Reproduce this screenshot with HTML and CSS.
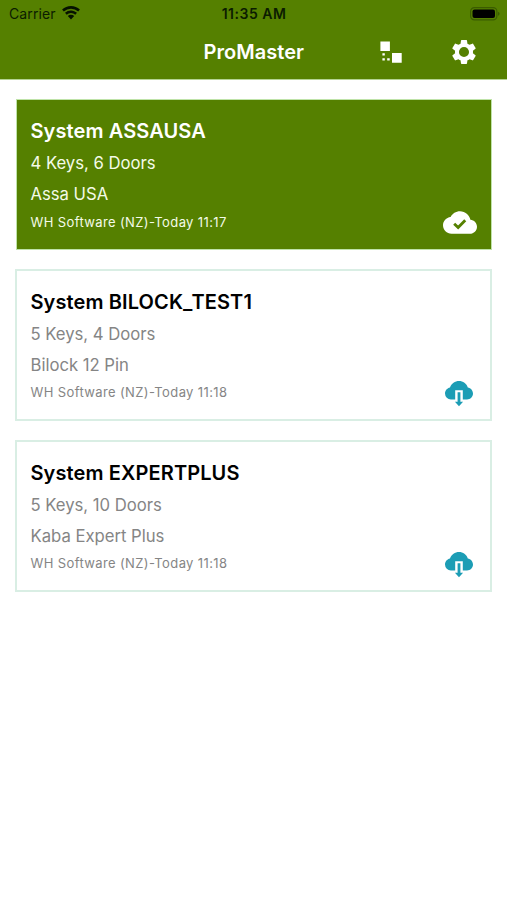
FILE: index.html
```html
<!DOCTYPE html>
<html lang="en">
<head>
<meta charset="utf-8">
<title>ProMaster</title>
<link rel="stylesheet" href="styles.css">
</head>
<body>
<header class="header">
  <div class="status">
    <div class="carrier"><span>Carrier</span>
      <svg class="wifi" viewBox="0 0 18 14"><path d="M9 .1c3.400 0 6.500 1.300 8.900 3.500l-1.700 1.900A10.700 10.700 0 0 0 9 2.700 10.700 10.700 0 0 0 1.800 5.500L.1 3.600A13 13 0 0 1 9 .1zM9 4.400c2.300 0 4.400.9 6 2.400l-1.700 1.900A6.400 6.400 0 0 0 9 7a6.400 6.400 0 0 0-4.300 1.700L3 6.800a8.800 8.800 0 0 1 6-2.400zM9 8.700c1.200 0 2.300.5 3.200 1.200L9 13.500 5.800 9.900A4.800 4.800 0 0 1 9 8.700z"/></svg>
    </div>
    <div class="clock">11:35 AM</div>
    <svg class="battery" viewBox="0 0 30 14"><rect class="shell" x=".6" y=".6" width="26.300" height="12.300" rx="3.800"/><rect x="2.500" y="2.500" width="22.500" height="8.500" rx="2"/><path class="cap" d="M28 4.800q1.600.7 1.600 2t-1.600 2z"/></svg>
  </div>
  <div class="bar">
    <h1 class="title">ProMaster</h1>
    <svg class="transfer" viewBox="0 0 22 22"><path d="M.4.400h9.500v9.500H.4zM12 12h9.700v9.700H12zM2.400 12.300h2.400v2.200H2.400zM2.400 17.200h2.400v2.200H2.400zM7.200 17.200h2.500v2.200H7.200z"/></svg>
    <svg class="gear" viewBox="2 2 20 20"><path d="M19.430 12.980c.04-.32.07-.64.07-.98s-.03-.66-.07-.98l2.110-1.650c.19-.15.24-.42.12-.64l-2-3.460c-.12-.22-.39-.3-.61-.22l-2.490 1c-.52-.4-1.080-.73-1.690-.98l-.38-2.650C14.460 2.180 14.250 2 14 2h-4c-.25 0-.46.18-.49.420l-.38 2.650c-.61.25-1.170.59-1.690.98l-2.490-1c-.23-.09-.49 0-.61.22l-2 3.460c-.13.22-.07.49.12.64l2.110 1.650c-.04.32-.07.65-.07.98s.03.66.07.98l-2.110 1.650c-.19.15-.24.42-.12.64l2 3.460c.12.22.39.3.61.22l2.490-1c.52.4 1.080.73 1.690.98l.38 2.650c.03.24.24.42.49.42h4c.25 0 .46-.18.49-.42l.38-2.650c.61-.25 1.170-.59 1.690-.98l2.490 1c.23.09.49 0 .61-.22l2-3.460c.12-.22.07-.49-.12-.64l-2.110-1.650zM12 16.200a4.200 4.200 0 1 1 0-8.400 4.200 4.200 0 0 1 0 8.400z"/></svg>
  </div>
</header>
<main class="list">
  <section class="card active">
    <h2 class="name">System ASSAUSA</h2>
    <p class="line">4 Keys, 6 Doors</p>
    <p class="line">Assa USA</p>
    <p class="meta">WH Software (NZ)-Today 11:17</p>
    <svg class="done" viewBox="0 4 24 16"><path d="M19.350 10.040C18.670 6.590 15.640 4 12 4 9.110 4 6.600 5.640 5.350 8.040 2.340 8.360 0 10.910 0 14c0 3.310 2.690 6 6 6h13c2.760 0 5-2.240 5-5 0-2.640-2.050-4.780-4.650-4.960z"/><path class="tick" d="M7.900 12.800l2.800 2.800 5-5.200"/></svg>
  </section>
  <section class="card">
    <h2 class="name">System BILOCK_TEST1</h2>
    <p class="line">5 Keys, 4 Doors</p>
    <p class="line">Bilock 12 Pin</p>
    <p class="meta">WH Software (NZ)-Today 11:18</p>
    <svg class="download" viewBox="0 0 28 26"><path d="M6 18.500A5.900 5.900 0 0 1 0 12.600C0 9.500 2.200 7.100 5 6.500 6.400 2.500 10 0 14 0s7.600 2.500 8.800 6.500c3 .5 5.200 3 5.200 6.100 0 3.300-2.600 5.900-6 5.900h-4.200V9.200h-7.600v9.300z"/><path d="M12.600 11.200h2.800v9.600h2.700L14 25.200l-4.100-4.400h2.700z"/></svg>
  </section>
  <section class="card">
    <h2 class="name">System EXPERTPLUS</h2>
    <p class="line">5 Keys, 10 Doors</p>
    <p class="line">Kaba Expert Plus</p>
    <p class="meta">WH Software (NZ)-Today 11:18</p>
    <svg class="download" viewBox="0 0 28 26"><path d="M6 18.500A5.900 5.900 0 0 1 0 12.600C0 9.500 2.200 7.100 5 6.500 6.400 2.500 10 0 14 0s7.600 2.500 8.800 6.500c3 .5 5.200 3 5.200 6.100 0 3.300-2.600 5.900-6 5.900h-4.200V9.200h-7.600v9.300z"/><path d="M12.600 11.200h2.800v9.600h2.700L14 25.200l-4.100-4.400h2.700z"/></svg>
  </section>
</main>
</body>
</html>
```
FILE: styles.css
```css
* { box-sizing: border-box; margin: 0; padding: 0; }
body { height: 900px; background: #fff; font-family: Inter, "Liberation Sans", sans-serif; color: #000; }
svg { display: block; }
.header { height: 80px; background: #558000; border-bottom: 1px solid #b4d392; }
.status { height: 27px; padding: 0 7px 0 9px; display: grid; grid-template-columns: 1fr auto 1fr; align-items: center; font-size: 14px; color: #0b1c00; }
.carrier { display: flex; align-items: center; gap: 6px; letter-spacing: .1px; }
.wifi { width: 18px; height: 14px; margin-top: -2px; fill: #061200; }
.clock { font-weight: 600; font-size: 14px; letter-spacing: .5px; margin-right: 1px; }
.battery { width: 30px; height: 14px; justify-self: end; }
.shell { fill: none; stroke: #3b5c00; stroke-width: 1.200; }
.cap { fill: #3b5c00; }
.bar { height: 50px; padding: 0 31px 0 203.500px; display: flex; align-items: center; color: #fff; fill: #fff; }
.title { flex: 1; font-size: 20px; font-weight: 600; line-height: 24px; letter-spacing: .05px; }
.transfer { width: 22px; height: 22px; margin-right: 50px; }
.gear { width: 24px; height: 24px; }
.list { padding: 19px 15px; display: flex; flex-direction: column; gap: 19px; }
.card { position: relative; height: 152px; padding: 18px 14px 0 13.500px; border: 2px solid #d9eee4; }
.name { font-size: 20px; font-weight: 600; line-height: 26px; letter-spacing: .11px; white-space: nowrap; }
.line { font-size: 16.700px; line-height: 24px; margin-top: 6.500px; letter-spacing: -.02px; color: #858585; }
.name + .line { margin-top: 7px; }
.meta { font-size: 13px; line-height: 18px; margin-top: 6.500px; letter-spacing: .38px; color: #858585; }
.active { height: 151px; margin: 0 0 0 1px; padding: 18px 14px 0 13.500px; background: #558000; border: 1px solid #bfe3a8; color: #fff; }
.active .line, .active .meta { color: #f4fbe8; }
.active .meta { margin-top: 7.500px; }
.done { position: absolute; right: 14px; bottom: 15px; width: 34px; height: 23px; fill: #fff; }
.tick { fill: none; stroke: #558000; stroke-width: 2; }
.download { position: absolute; right: 17px; bottom: 12px; width: 28px; height: 26px; fill: #1c9db5; }
```
